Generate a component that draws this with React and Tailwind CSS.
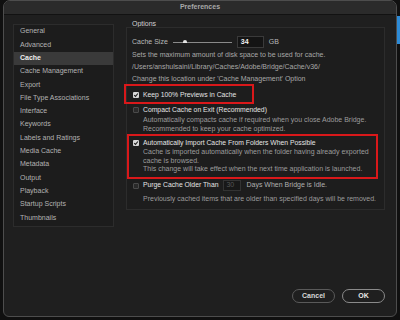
import React from "react";

const items = [
  "General",
  "Advanced",
  "Cache",
  "Cache Management",
  "Export",
  "File Type Associations",
  "Interface",
  "Keywords",
  "Labels and Ratings",
  "Media Cache",
  "Metadata",
  "Output",
  "Playback",
  "Startup Scripts",
  "Thumbnails",
];

function Check({ on }) {
  if (on)
    return (
      <div className="w-[6px] h-[6px] rounded-[1px] bg-[#d6d6d6] flex items-center justify-center shrink-0">
        <svg width="6" height="6" viewBox="0 0 6 6">
          <path d="M1.2 3.1 L2.5 4.4 L4.9 1.5" fill="none" stroke="#1e1e1e" strokeWidth="1.1" />
        </svg>
      </div>
    );
  return <div className="w-[6px] h-[6px] rounded-[1px] bg-[#2a2a2a] border border-[#4a4a4a] shrink-0" />;
}

export default function App() {
  return (
    <div
      className="w-[400px] h-[320px] bg-[#101010] flex overflow-hidden text-[7px]"
      style={{ fontFamily: '"Liberation Sans", Arial, sans-serif' }}
    >
      <div className="w-[3px] shrink-0" />
      <div className="w-[394px] h-[317px] shrink-0 rounded-t-[7px] rounded-b-[6px] border border-[#4d4d4d] bg-[#1f1f1f] flex flex-col overflow-hidden relative">
        <div className="h-[14px] shrink-0 bg-[#2b2b2b] border-b border-[#121212] flex items-center justify-center font-bold text-[#a9a9a9]">
          Preferences
        </div>
        <div className="flex">
          <div className="ml-[9px] mt-[9px] w-[101px] h-[203px] border border-[#2c2c2c] bg-[#1c1c1c] flex flex-col">
            {items.map((t) =>
              t === "Cache" ? (
                <div key={t} className="h-[13.3px] flex items-center pl-[6px] bg-[#3a3a3a] text-[#ededed] font-bold">
                  {t}
                </div>
              ) : (
                <div key={t} className="h-[13.3px] flex items-center pl-[6px] text-[#b3b3b3]">
                  {t}
                </div>
              )
            )}
          </div>
          <div className="ml-[12px] flex flex-col">
            <div className="mt-[5px] h-[7px] leading-[7px] pl-[6px] text-[#d2d2d2]">Options</div>
            <div className="w-[259px] h-[183px] border border-[#2c2c2c] bg-[#1d1d1d] flex flex-col pl-[5px]">
              <div className="mt-[8px] h-[12px] flex items-center">
                <span className="text-[#b8b8b8]">Cache Size</span>
                <div className="ml-[5px] w-[59px] h-[12px] relative">
                  <div className="absolute left-0 right-0 top-[6px] h-[1px] bg-[#8a8a8a]" />
                  <div className="absolute left-[10px] top-[4px] w-[4px] h-[3px] bg-[#e6e6e6] rounded-t-[2px]" />
                </div>
                <div className="ml-[5px] w-[27px] h-[12px] bg-[#141414] border border-[#3a3a3a] flex items-center pl-[3px] text-[#f0f0f0] font-bold">
                  34
                </div>
                <span className="ml-[5px] text-[#b8b8b8]">GB</span>
              </div>
              <div className="mt-[1px] leading-[12px] text-[#a8a8a8]">
                <div>Sets the maximum amount of disk space to be used for cache.</div>
                <div>/Users/anshulsaini/Library/Caches/Adobe/Bridge/Cache/v36/</div>
                <div>Change this location under 'Cache Management' Option</div>
              </div>
              <div className="mt-[5px] h-[10px] flex items-center pl-[1px] gap-[4px]">
                <Check on />
                <span className="text-[#e4e4e4] text-[6.8px]">Keep 100% Previews in Cache</span>
              </div>
              <div className="mt-[5px] h-[10px] flex items-center pl-[1px] gap-[4px]">
                <Check />
                <span className="text-[#e4e4e4] text-[6.8px]">Compact Cache on Exit (Recommended)</span>
              </div>
              <div className="pl-[11px] leading-[9px] text-[#9c9c9c]">
                <div>Automatically compacts cache if required when you close Adobe Bridge.</div>
                <div>Recommended to keep your cache optimized.</div>
              </div>
              <div className="mt-[5px] h-[10px] flex items-center pl-[1px] gap-[4px]">
                <Check on />
                <span className="text-[#e4e4e4] text-[6.8px]">Automatically Import Cache From Folders When Possible</span>
              </div>
              <div className="pl-[11px] leading-[8.5px] text-[#9c9c9c]">
                <div>Cache is imported automatically when the folder having already exported</div>
                <div>cache is browsed.</div>
                <div>This change will take effect when the next time application is launched.</div>
              </div>
              <div className="mt-[6px] h-[12px] flex items-center pl-[1px]">
                <Check />
                <span className="ml-[4px] text-[#e4e4e4] text-[6.8px]">Purge Cache Older Than</span>
                <div className="ml-[5px] w-[18px] h-[11px] bg-[#181818] border border-[#333] flex items-center pl-[2px] text-[#555]">
                  30
                </div>
                <span className="ml-[5px] text-[#b0b0b0]">Days When Bridge is Idle.</span>
              </div>
              <div className="mt-[2px] pl-[11px] leading-[9px] text-[#9c9c9c]">
                Previously cached items that are older than specified days will be removed.
              </div>
            </div>
          </div>
        </div>
        <div className="mt-auto mb-[13px] mr-[11px] flex justify-end gap-[7px]">
          <div className="w-[43px] h-[14px] rounded-full border border-[#5a5a5a] flex items-center justify-center font-bold text-[#d8d8d8]">
            Cancel
          </div>
          <div className="w-[43px] h-[14px] rounded-full border border-[#8a8a8a] flex items-center justify-center font-bold text-[#e8e8e8]">
            OK
          </div>
        </div>
        <div className="absolute left-[120px] top-[83px] w-[130px] h-[20px] border-2 border-[#d9181a]" />
        <div className="absolute left-[123px] top-[133px] w-[251px] h-[45px] border-2 border-[#d9181a]" />
      </div>
      <div className="w-[3px] shrink-0 relative">
        <div className="absolute left-0 top-[16px] w-[3px] h-[28px] bg-[#2c8ad6]" />
      </div>
    </div>
  );
}
